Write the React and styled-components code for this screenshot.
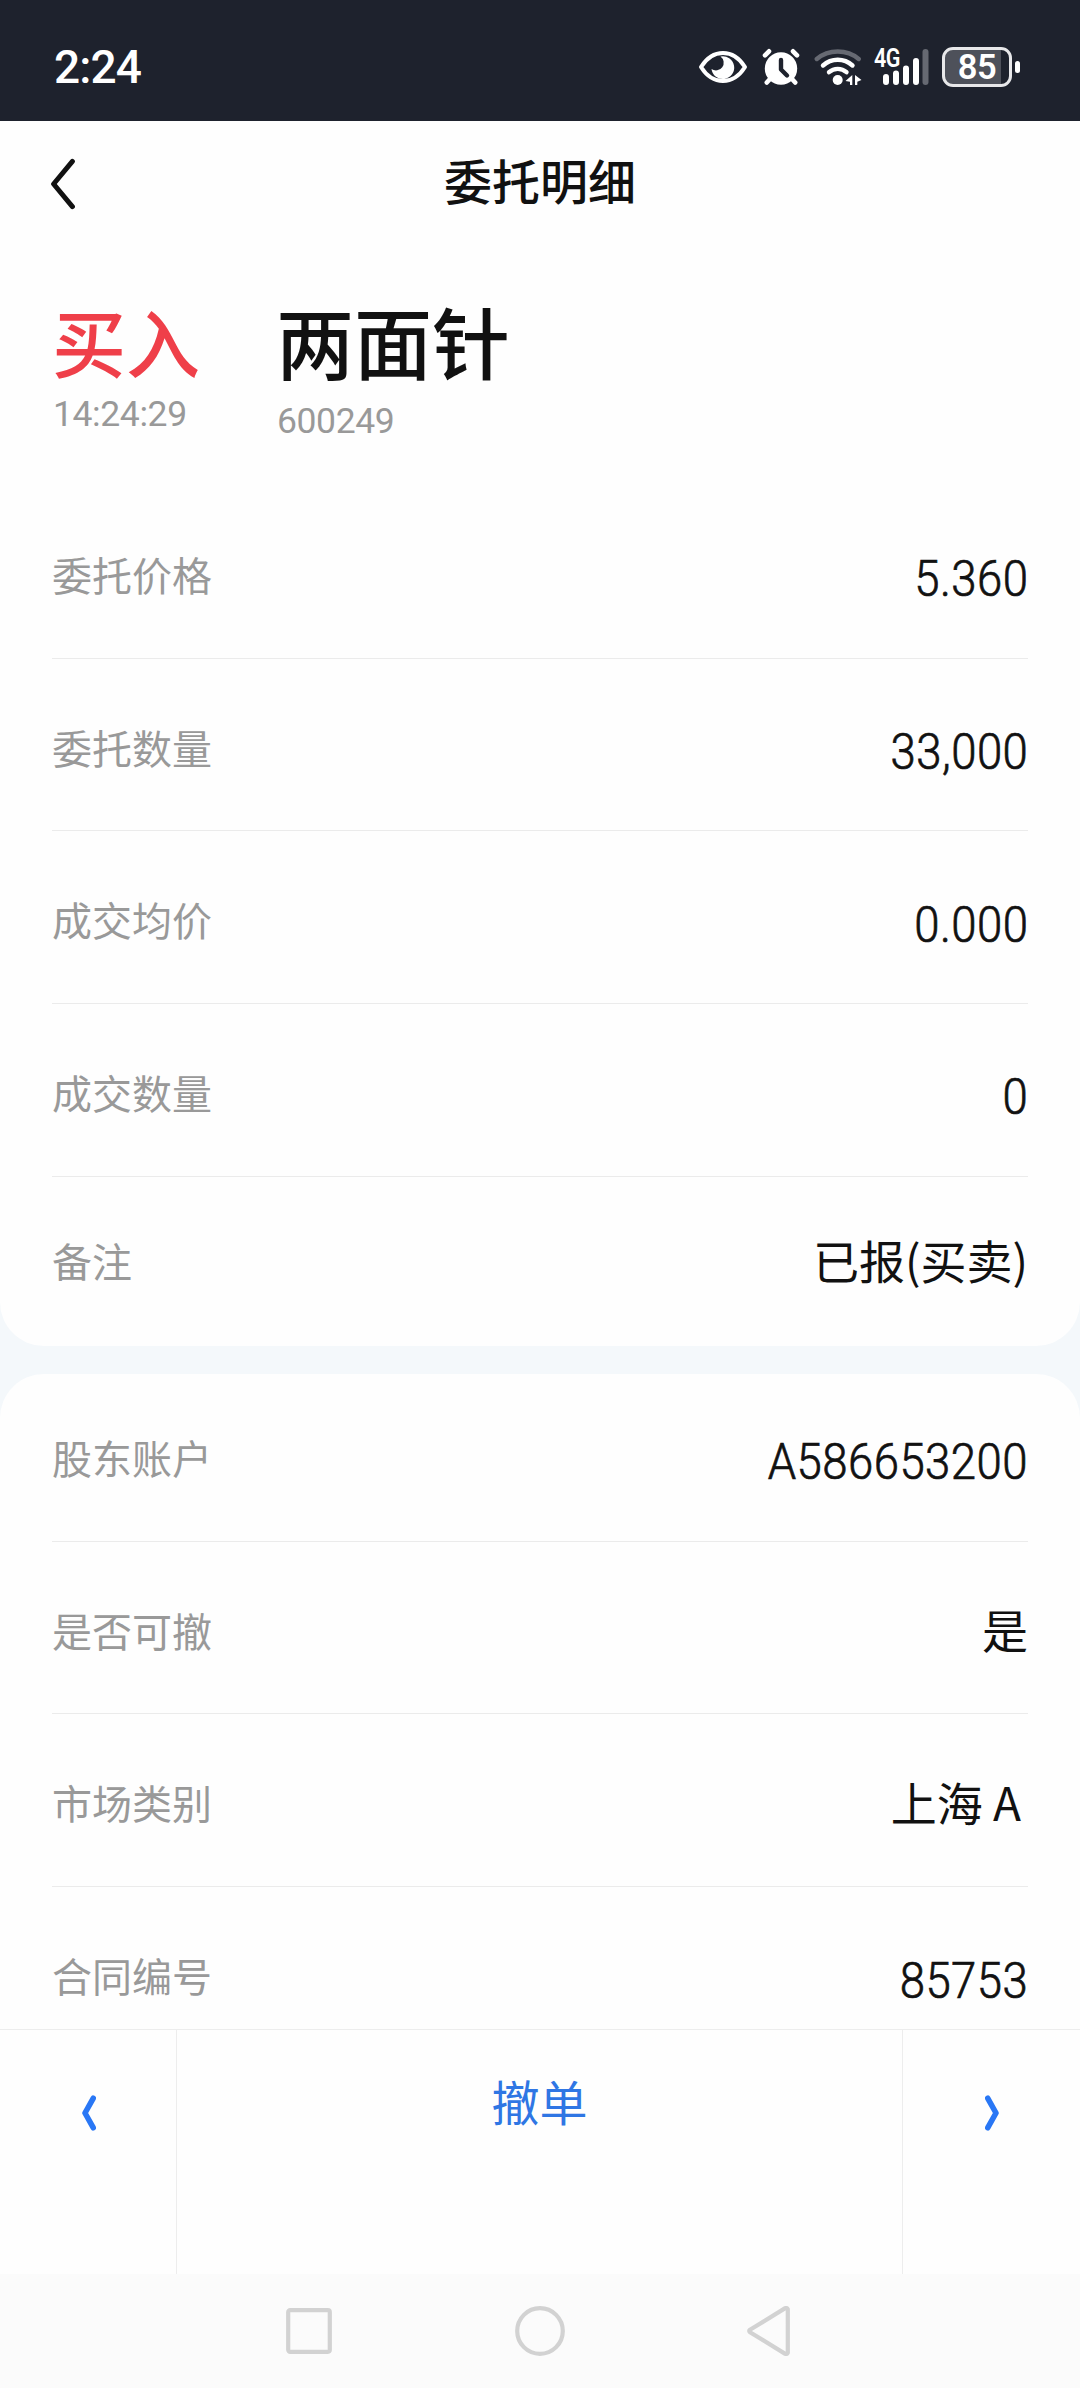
import React from "react";
import styled, { createGlobalStyle } from "styled-components";

const orderRows = [
  { label: "委托价格", value: "5.360", isNumber: true },
  { label: "委托数量", value: "33,000", isNumber: true },
  { label: "成交均价", value: "0.000", isNumber: true },
  { label: "成交数量", value: "0", isNumber: true },
  { label: "备注", value: "已报(买卖)", height: 169, shift: 0 },
];

const accountRows = [
  { label: "股东账户", value: "A586653200", isNumber: true, height: 168, shift: 1 },
  { label: "是否可撤", value: "是" },
  { label: "市场类别", value: "上海 A", indent: 7 },
  { label: "合同编号", value: "85753", isNumber: true },
];

export default function App() {
  return (
    <>
      <GlobalStyle />
      <Screen>
        <StatusBar>
          <Clock>2:24</Clock>
          <StatusIcons />
        </StatusBar>
        <Header>
          <BackButton aria-label="返回">
            <svg width="26" height="52" viewBox="0 0 26 52">
              <path d="M22.4 3.4 3.6 26l18.8 22.6" fill="none" stroke="#111" strokeWidth="5" strokeLinecap="round" strokeLinejoin="round" />
            </svg>
          </BackButton>
          <Title>委托明细</Title>
        </Header>
        <Content>
          <Card $position="top">
            <Summary>
              <SummaryItem $width={224}>
                <Side>买入</Side>
                <SubText $top={3}>14:24:29</SubText>
              </SummaryItem>
              <SummaryItem>
                <StockName>两面针</StockName>
                <SubText $top={10}>600249</SubText>
              </SummaryItem>
            </Summary>
            <RowList>
              {orderRows.map((row) => (
                <DetailRow key={row.label} row={row} />
              ))}
            </RowList>
          </Card>
          <Card $position="bottom">
            <RowList>
              {accountRows.map((row) => (
                <DetailRow key={row.label} row={row} />
              ))}
            </RowList>
          </Card>
        </Content>
        <ActionBar>
          <ArrowButton aria-label="上一条">
            <Chevron />
          </ArrowButton>
          <CancelButton>撤单</CancelButton>
          <ArrowButton aria-label="下一条">
            <Chevron flip />
          </ArrowButton>
        </ActionBar>
        <NavBar>
          <svg width="46" height="46" viewBox="0 0 46 46">
            <rect x="2.2" y="2.2" width="41.6" height="41.6" rx="2" fill="none" stroke="#d2d2d2" strokeWidth="4.2" />
          </svg>
          <svg width="50" height="50" viewBox="0 0 50 50">
            <circle cx="25" cy="25" r="22.8" fill="none" stroke="#d2d2d2" strokeWidth="4.2" />
          </svg>
          <svg width="43" height="50" viewBox="0 0 43 50">
            <path d="M40.8 3.2v43.6q-1 2-3 .8L3 26.2q-1.6-1.2 0-2.4L37.8 2.4q2-1.2 3 .8Z" fill="none" stroke="#d2d2d2" strokeWidth="4.2" strokeLinejoin="round" />
          </svg>
        </NavBar>
      </Screen>
    </>
  );
}

function DetailRow({ row }) {
  return (
    <Row $height={row.height} $shift={row.shift}>
      <Label>{row.label}</Label>
      {row.isNumber ? <NumberValue>{row.value}</NumberValue> : <TextValue $indent={row.indent}>{row.value}</TextValue>}
    </Row>
  );
}

function Chevron({ flip }) {
  return (
    <svg width="14" height="36" viewBox="0 0 14 36">
      <path
        d={flip ? "M2.8 3.3 11 18 2.8 32.7" : "M11.2 3.3 3 18l8.2 14.7"}
        fill="none"
        stroke="#2977f5"
        strokeWidth="5.6"
        strokeLinecap="round"
        strokeLinejoin="round"
      />
    </svg>
  );
}

function StatusIcons() {
  return (
    <IconGroup>
      {/* 护眼模式 */}
      <StatusIcon $left={0} width="50" height="40" viewBox="0 0 50 40">
        <path d="M3 20C9 10.5 16 6 25 6s16 4.5 22 14c-6 9.5-13 14-22 14S9 29.5 3 20Z" fill="none" stroke="#fff" strokeWidth="4" strokeLinejoin="round" />
        <path d="M22.5 9.5A11.4 11.4 0 1 1 13.5 22a6.5 6.5 0 0 0 9-12.5Z" fill="#fff" />
      </StatusIcon>
      {/* 闹钟 */}
      <StatusIcon $left={13} width="40" height="40" viewBox="0 0 40 40">
        <circle cx="20" cy="21.5" r="16.2" fill="#fff" />
        <path d="m4 8.3 4-4M36 8.3l-4-4M9 32l-3.2 3.5M31 32l3.2 3.5" stroke="#fff" strokeWidth="4.6" strokeLinecap="round" />
        <path d="M20 13v9.5l6 6" fill="none" stroke="#1e222d" strokeWidth="4.4" strokeLinecap="round" strokeLinejoin="round" />
      </StatusIcon>
      {/* Wi-Fi */}
      <StatusIcon $left={13} width="48" height="40" viewBox="0 0 48 40">
        <g fill="none" strokeWidth="4.4" strokeLinecap="round">
          <path d="M2.8 12C14.5 2 33 2 44.7 12" stroke="#666972" />
          <path d="M9 18.5c8.5-7.6 21-7.6 29.5 0" stroke="#fff" />
          <path d="M15 25.2c5-4.5 12.5-4.5 17.5 0" stroke="#fff" />
        </g>
        <circle cx="23.7" cy="33" r="5" fill="#fff" />
        <path d="M38.3 28v10h-2.3v-3.2L31.5 34ZM41 28v10h2.3v-3.2L47.5 33Z" fill="#fff" />
      </StatusIcon>
      {/* 信号 */}
      <SignalBox>
        <NetworkType>4G</NetworkType>
        <svg width="56" height="40" viewBox="0 0 56 40">
          <g stroke="#fff" strokeWidth="6" strokeLinecap="round">
            <path d="M12 30v5M22 26.5V35M32 21.5V35M42 14V35" />
            <path d="M51.5 5V35" stroke="#666972" />
          </g>
        </svg>
      </SignalBox>
      <Battery>
        <BatteryBody>85</BatteryBody>
        <BatteryTip />
      </Battery>
    </IconGroup>
  );
}

const GlobalStyle = createGlobalStyle`
  * {
    box-sizing: border-box;
  }

  body {
    margin: 0;
    background: #fefefe;
  }

  button {
    padding: 0;
    border: 0;
    background: none;
    font: inherit;
  }

  svg {
    display: block;
    flex-shrink: 0;
  }
`;

const Screen = styled.div`
  display: flex;
  flex-direction: column;
  width: 1080px;
  height: 2388px;
  overflow: hidden;
  color: #111;
  background: #fefefe;
  font-family: "Noto Sans CJK SC", "Noto Sans", sans-serif;
`;

const StatusBar = styled.div`
  display: flex;
  flex-shrink: 0;
  justify-content: space-between;
  height: 121px;
  padding: 0 60px 0 54px;
  color: #fff;
  background: #1e222d;
`;

const Clock = styled.span`
  padding-top: 40px;
  font: 500 46px/54px Roboto, sans-serif;
  letter-spacing: -0.9px;
`;

const IconGroup = styled.div`
  display: flex;
  align-items: flex-start;
  padding-top: 47px;
`;

const StatusIcon = styled.svg`
  margin-left: ${(props) => props.$left}px;
`;

const SignalBox = styled.div`
  position: relative;
  margin-left: 12px;
`;

const NetworkType = styled.span`
  position: absolute;
  top: -1px;
  left: 0;
  font: 600 25px/25px Roboto, sans-serif;
  letter-spacing: -0.5px;
  transform: scaleX(0.86);
  transform-origin: left center;
`;

const Battery = styled.div`
  display: flex;
  align-items: center;
  gap: 3px;
  margin-left: 12px;
`;

const BatteryBody = styled.div`
  width: 70px;
  height: 40px;
  border: 3px solid #e8e8ea;
  border-radius: 11px;
  background: linear-gradient(to right, #4e515a 56px, transparent 56px);
  font: 600 34.5px/35px Roboto, sans-serif;
  letter-spacing: -0.5px;
  text-align: center;
`;

const BatteryTip = styled.div`
  width: 5px;
  height: 12px;
  border-radius: 3px;
  background: #fff;
`;

const Header = styled.header`
  display: grid;
  flex-shrink: 0;
  grid-template-columns: 140px 1fr 140px;
  height: 125px;
`;

const BackButton = styled.button`
  display: flex;
  padding: 37px 0 0 50px;
`;

const Title = styled.h1`
  margin: 0;
  padding-top: 22px;
  font-size: 48px;
  font-weight: 500;
  line-height: 72px;
  text-align: center;
`;

const Content = styled.main`
  display: flex;
  flex: 1;
  flex-direction: column;
  gap: 28px;
  min-height: 0;
  overflow: hidden;
  background: #f4f8fb;
`;

const Card = styled.section`
  flex-shrink: 0;
  padding: 0 52px;
  background: #fefefe;
  border-radius: ${(props) => (props.$position === "top" ? "0 0 44px 44px" : "44px 44px 0 0")};
`;

const Summary = styled.div`
  display: flex;
  height: 240px;
  padding-top: 41px;
`;

const SummaryItem = styled.div`
  width: ${(props) => (props.$width ? `${props.$width}px` : "auto")};
`;

const Side = styled.div`
  color: #ef3f49;
  font-size: 74px;
  font-weight: 500;
  line-height: 106px;
`;

const StockName = styled.div`
  font-size: 78px;
  font-weight: 500;
  line-height: 106px;
`;

const SubText = styled.div`
  margin-top: ${(props) => props.$top}px;
  padding-left: 1px;
  color: #999;
  font: 400 35.5px/36px Roboto, sans-serif;
  letter-spacing: -0.4px;
`;

const RowList = styled.div`
  display: flex;
  flex-direction: column;
`;

const Row = styled.div`
  display: flex;
  align-items: center;
  justify-content: space-between;
  height: ${(props) => props.$height || 172.7}px;
  padding-top: ${(props) => (props.$shift === undefined ? 6 : props.$shift)}px;

  &:not(:last-child) {
    border-bottom: 1px solid #ebebeb;
  }
`;

const Label = styled.span`
  margin-bottom: 2px;
  color: #999;
  font-size: 40px;
  line-height: 60px;
`;

const NumberValue = styled.span`
  padding-top: 9px;
  font: 300 50px/60px Roboto, sans-serif;
  letter-spacing: 0.5px;
  -webkit-text-stroke: 0.7px #111;
  transform: scaleX(0.91);
  transform-origin: right center;
`;

const TextValue = styled.span`
  margin-bottom: 5px;
  padding-right: ${(props) => props.$indent || 0}px;
  font-size: 46px;
  line-height: 60px;
`;

const ActionBar = styled.footer`
  display: grid;
  flex-shrink: 0;
  grid-template-columns: 177px 1fr 177px;
  height: 245px;
  border-top: 1px solid #ededed;
`;

const ArrowButton = styled.button`
  display: flex;
  justify-content: center;
  padding-top: 65px;
`;

const CancelButton = styled.button`
  display: flex;
  justify-content: center;
  margin-left: -1px;
  padding-top: 34px;
  border-right: 1px solid #ededed;
  border-left: 1px solid #ededed;
  color: #2f76e4;
  font-size: 48px;
  line-height: 72px;
`;

const NavBar = styled.nav`
  display: flex;
  flex-shrink: 0;
  align-items: center;
  justify-content: space-between;
  height: 114px;
  padding: 0 290px 0 286px;
  background: #fbfbfb;
`;
